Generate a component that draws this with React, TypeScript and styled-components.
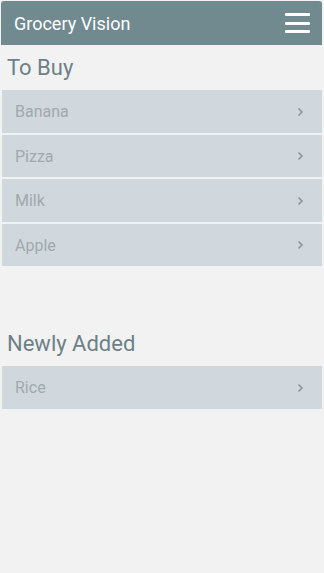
import { createGlobalStyle } from "styled-components"
import styled from "styled-components"

const GlobalStyle = createGlobalStyle`
  html, body {
    margin: 0;
    padding: 0;
    background: #f2f2f2;
    font-family: Roboto, "Liberation Sans", sans-serif;
  }
`

const Page = styled.div`
  width: 324px;
  min-height: 573px;
  box-sizing: border-box;
  padding: 1px 2px 0 1px;
  background: #f2f2f2;
`

const Header = styled.header`
  height: 44px;
  background: #708a90;
  border-radius: 3px 3px 0 0;
  display: flex;
  align-items: center;
  justify-content: space-between;
  padding: 0 12px 0 13px;
`

const Title = styled.h1`
  margin: 0;
  font-size: 18px;
  font-weight: 400;
  color: #fff;
`

const Menu = styled.button`
  width: 25px;
  height: 20px;
  padding: 0;
  border: 0;
  background: none;
  display: flex;
  flex-direction: column;
  justify-content: space-between;

  span {
    display: block;
    height: 3px;
    background: #fff;
    border-radius: 1px;
  }
`

const Section = styled.section<{ $top: number }>`
  margin-top: ${(p) => p.$top}px;
`

const Heading = styled.h2`
  margin: 0 0 9px 6px;
  font-size: 22px;
  font-weight: 400;
  color: #6d8087;
  line-height: 26px;
`

const List = styled.ul`
  list-style: none;
  margin: 0 0 0 1px;
  padding: 0;
  display: flex;
  flex-direction: column;
  gap: 2px;
`

const Item = styled.li`
  height: 42.5px;
  background: #d1d8dd;
  display: flex;
  align-items: center;
  justify-content: space-between;
  padding: 1px 18px 0 13px;
  box-sizing: border-box;
  font-size: 16px;
  color: #a0a9ae;
`

const Chevron = () => (
  <svg width="7" height="10" viewBox="0 0 7 10">
    <path d="M1.5 1.5 L5 5 L1.5 8.5" fill="none" stroke="#8a959b" strokeWidth="1.6" />
  </svg>
)

const toBuy = ["Banana", "Pizza", "Milk", "Apple"]
const added = ["Rice"]

function App() {
  return (
    <>
      <GlobalStyle />
      <Page>
        <Header>
          <Title>Grocery Vision</Title>
          <Menu aria-label="menu">
            <span />
            <span />
            <span />
          </Menu>
        </Header>
        <Section $top={10}>
          <Heading>To Buy</Heading>
          <List>
            {toBuy.map((x) => (
              <Item key={x}>
                {x}
                <Chevron />
              </Item>
            ))}
          </List>
        </Section>
        <Section $top={65}>
          <Heading>Newly Added</Heading>
          <List>
            {added.map((x) => (
              <Item key={x}>
                {x}
                <Chevron />
              </Item>
            ))}
          </List>
        </Section>
      </Page>
    </>
  )
}

export default App
